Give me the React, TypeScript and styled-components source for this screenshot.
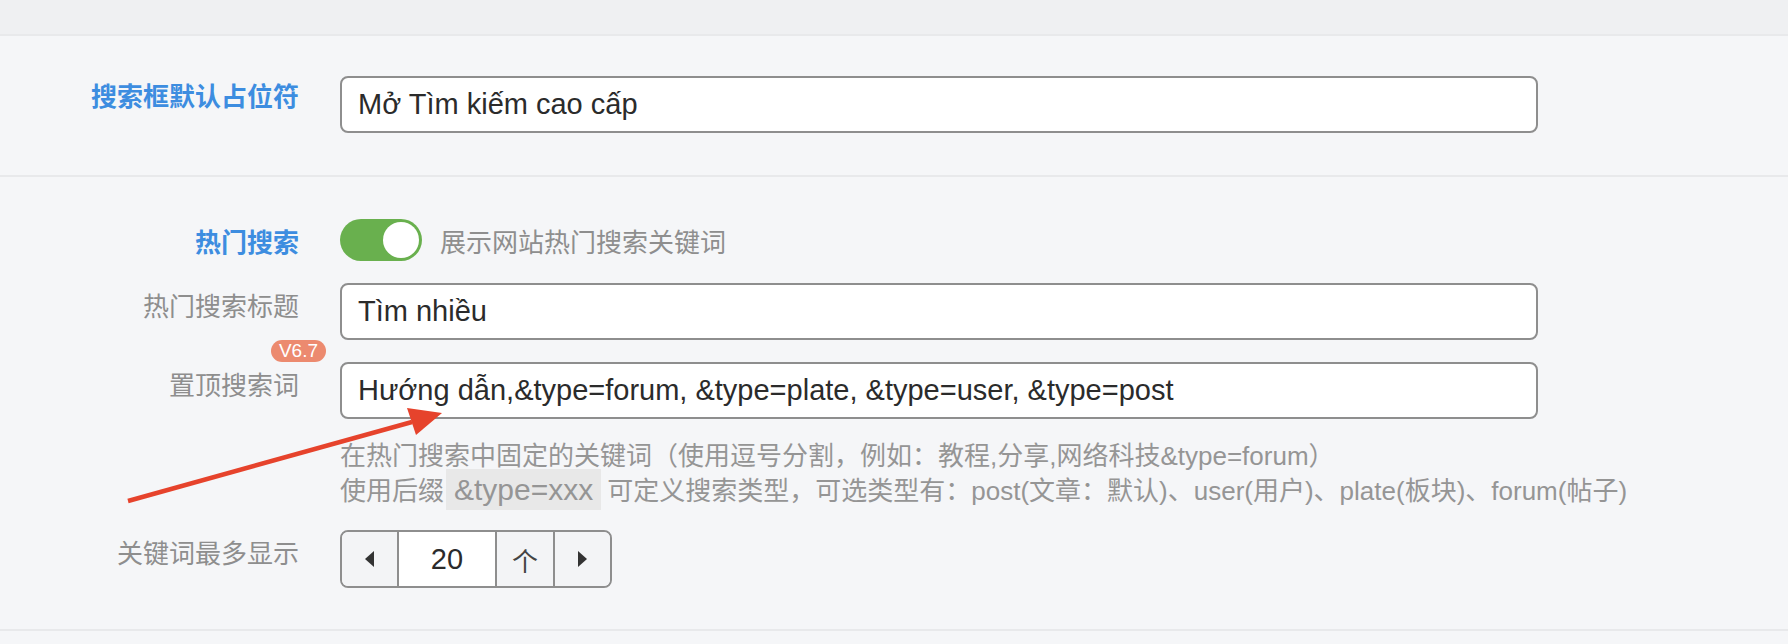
import React from "react";
import styled, { createGlobalStyle } from "styled-components";

const GlobalStyle = createGlobalStyle`
  body {
    margin: 0;
    background: #f5f6f8;
    font-family: "Liberation Sans", "Noto Sans CJK SC", sans-serif;
  }
`;

const Page = styled.div`
  position: relative;
  width: 1788px;
  height: 644px;
  overflow: hidden;
`;

const TopBand = styled.div`
  height: 34px;
  background: #eff0f2;
  border-bottom: 2px solid #e8e9eb;
`;

const Section = styled.section<{ $top: number; $bottom: number }>`
  display: flex;
  flex-direction: column;
  gap: 22px;
  padding: ${(p) => p.$top}px 0 ${(p) => p.$bottom}px;
  background: #f5f6f8;
  border-bottom: 2px solid #e8e9eb;
`;

const Row = styled.div<{ $center?: boolean }>`
  display: flex;
  align-items: ${(p) => (p.$center ? "center" : "flex-start")};
  gap: 41px;
`;

const Label = styled.div<{ $accent?: boolean }>`
  position: relative;
  flex: 0 0 299px;
  padding-top: ${(p) => (p.$accent ? 1 : 4)}px;
  text-align: right;
  font-family: "Noto Sans CJK SC", sans-serif;
  font-size: 26px;
  line-height: 36px;
  font-weight: ${(p) => (p.$accent ? 700 : 400)};
  color: ${(p) => (p.$accent ? "#3d8de0" : "#8e8e8e")};
`;

const Badge = styled.span`
  position: absolute;
  top: -22px;
  right: -27px;
  height: 22px;
  padding: 0 8px;
  border-radius: 11px;
  background: #ec8a6f;
  color: #fff;
  font-family: "Liberation Sans", sans-serif;
  font-size: 19px;
  line-height: 22px;
  font-weight: 400;
`;

const Field = styled.div`
  flex: 0 0 1198px;
  width: 1198px;
  min-width: 0;
  display: flex;
  flex-direction: column;
`;

const TextInput = styled.input`
  box-sizing: border-box;
  width: 100%;
  height: 57px;
  padding: 0 16px;
  border: 2px solid #8e8e8e;
  border-radius: 8px;
  background: #fff;
  color: #2b2b2b;
  font-family: "Liberation Sans", "Noto Sans CJK SC", sans-serif;
  font-size: 29px;
  outline: none;
`;

const Help = styled.div`
  margin-top: 21px;
  font-size: 26px;
  line-height: 33px;
  color: #959595;
  white-space: nowrap;
`;

const Code = styled.code`
  margin: 0 6px 0 2px;
  padding: 4px 8px;
  background: #e8e8e8;
  font-family: "Liberation Sans", sans-serif;
  font-size: 30px;
`;

const SwitchRow = styled.div`
  display: flex;
  align-items: center;
  gap: 18px;
`;

const Switch = styled.div<{ $on: boolean }>`
  position: relative;
  width: 82px;
  height: 42px;
  border-radius: 21px;
  background: ${(p) => (p.$on ? "#69b04e" : "#cfd1d4")};
`;

const Knob = styled.span<{ $on: boolean }>`
  position: absolute;
  top: 3px;
  ${(p) => (p.$on ? "right: 3px;" : "left: 3px;")}
  width: 36px;
  height: 36px;
  border-radius: 50%;
  background: #fff;
`;

const SwitchText = styled.span`
  font-family: "Noto Sans CJK SC", sans-serif;
  font-size: 26px;
  color: #8e8e8e;
`;

const Stepper = styled.div`
  display: inline-flex;
  align-self: flex-start;
  height: 58px;
  box-sizing: border-box;
  border: 2px solid #8e8e8e;
  border-radius: 8px;
  overflow: hidden;
`;

const Cell = styled.div<{ $w: number; $plain?: boolean }>`
  display: flex;
  align-items: center;
  justify-content: center;
  width: ${(p) => p.$w}px;
  background: ${(p) => (p.$plain ? "#fff" : "#f3f4f6")};
  color: #2b2b2b;
  font-size: 29px;
  & + & {
    border-left: 2px solid #8e8e8e;
  }
`;

const Unit = styled.span`
  font-family: "Noto Sans CJK SC", sans-serif;
  font-size: 26px;
  color: #444;
`;

const Caret = styled.span<{ $dir: "left" | "right" }>`
  width: 0;
  height: 0;
  border-top: 8px solid transparent;
  border-bottom: 8px solid transparent;
  ${(p) =>
    p.$dir === "left"
      ? "border-right: 9px solid #333;"
      : "border-left: 9px solid #333;"}
`;

const Overlay = styled.svg`
  position: absolute;
  top: 0;
  left: 0;
  pointer-events: none;
`;

export default function App() {
  return (
    <Page>
      <GlobalStyle />
      <TopBand />

      <Section $top={40} $bottom={42}>
        <Row>
          <Label $accent>搜索框默认占位符</Label>
          <Field>
            <TextInput defaultValue="Mở Tìm kiếm cao cấp" />
          </Field>
        </Row>
      </Section>

      <Section $top={42} $bottom={41}>
        <Row $center>
          <Label $accent>热门搜索</Label>
          <SwitchRow>
            <Switch $on>
              <Knob $on />
            </Switch>
            <SwitchText>展示网站热门搜索关键词</SwitchText>
          </SwitchRow>
        </Row>

        <Row>
          <Label>热门搜索标题</Label>
          <Field>
            <TextInput defaultValue="Tìm nhiều" />
          </Field>
        </Row>

        <Row>
          <Label>
            <Badge>V6.7</Badge>
            置顶搜索词
          </Label>
          <Field>
            <TextInput defaultValue="Hướng dẫn,&type=forum, &type=plate, &type=user, &type=post" />
            <Help>
              在热门搜索中固定的关键词（使用逗号分割，例如：教程,分享,网络科技&type=forum）
              <br />
              使用后缀<Code>&amp;type=xxx</Code>可定义搜索类型，可选类型有：post(文章：默认)、user(用户)、plate(板块)、forum(帖子)
            </Help>
          </Field>
        </Row>

        <Row>
          <Label>关键词最多显示</Label>
          <Stepper>
            <Cell $w={55}>
              <Caret $dir="left" />
            </Cell>
            <Cell $w={96} $plain>
              20
            </Cell>
            <Cell $w={56}>
              <Unit>个</Unit>
            </Cell>
            <Cell $w={55}>
              <Caret $dir="right" />
            </Cell>
          </Stepper>
        </Row>
      </Section>

      {/* callout arrow pointing at the pinned keywords */}
      <Overlay width="1788" height="644" viewBox="0 0 1788 644">
        <line x1="128" y1="501" x2="412" y2="422" stroke="#e6432c" strokeWidth="4.5" />
        <polygon points="442,413 407,408 416,435" fill="#e6432c" />
      </Overlay>
    </Page>
  );
}
